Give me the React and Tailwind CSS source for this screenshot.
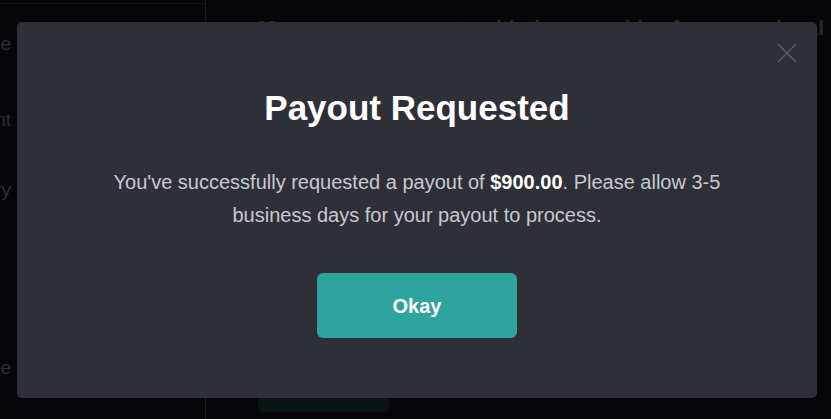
import React from "react";

const font = { fontFamily: '"Liberation Sans", Arial, Helvetica, sans-serif' };

const navItems = [
  { label: "Home", h: "h-[80px]" },
  { label: "Payment", h: "h-[72px]" },
  { label: "History", h: "h-[68px]" },
  { label: "", h: "h-[110px]" },
  { label: "Balance", h: "h-[68px]" },
];

const PayoutModal = () => {
  return (
    <div className="absolute inset-0 flex items-center justify-center pl-[3px] pt-[1px]">
      <div className="relative w-[800px] h-[376px] rounded-[5px] bg-[#2e2f37] flex flex-col items-center pt-[66px]">
        {/* close */}
        <button className="absolute top-[21px] right-[20px] w-[20px] h-[20px]">
          <svg viewBox="0 0 20 20" className="w-[20px] h-[20px]">
            <path d="M1 1 L19 19 M19 1 L1 19" stroke="#5d5e67" strokeWidth="1.3" fill="none" />
          </svg>
        </button>

        <h1 className="text-[35px] leading-[40px] font-bold text-white">
          Payout Requested
        </h1>

        <p className="mt-[38px] max-w-[625px] text-center text-[20px] leading-[33px] text-[#c9c9d1]">
          You've successfully requested a payout of{" "}
          <span className="font-bold text-white">$900.00</span>. Please allow 3-5
          business days for your payout to process.
        </p>

        <button className="mt-[41px] w-[200px] h-[65px] rounded-[6px] bg-[#2fa39e] text-white text-[20px] font-bold">
          Okay
        </button>
      </div>
    </div>
  );
};

export default function App() {
  return (
    <div style={font} className="relative w-full h-[419px] overflow-hidden bg-[#060608]">
      {/* page behind the overlay */}
      <div className="flex h-full">
        <div className="w-[206px] shrink-0 border-r border-[#0d2422] flex flex-col">
          <div className="h-[4px] border-b border-[#141418]" />
          {navItems.map((item, i) => (
            <div key={i} className={`${item.h} flex items-center`}>
              <div className="w-[11px] flex justify-end">
                <span className="whitespace-nowrap text-[19px] text-[#2e2e33]">
                  {item.label}
                </span>
              </div>
            </div>
          ))}
        </div>

        <div className="flex-1 flex flex-col pl-[52px] pt-[12px]">
          <div className="whitespace-nowrap text-[21px] font-bold text-[#26262b]">
            Manage your payouts with the wearables from your local store data
          </div>
          <div className="mt-auto mb-[7px] w-[131px] h-[30px] rounded-[5px] bg-[#061414]" />
        </div>
      </div>

      <PayoutModal />
    </div>
  );
}
